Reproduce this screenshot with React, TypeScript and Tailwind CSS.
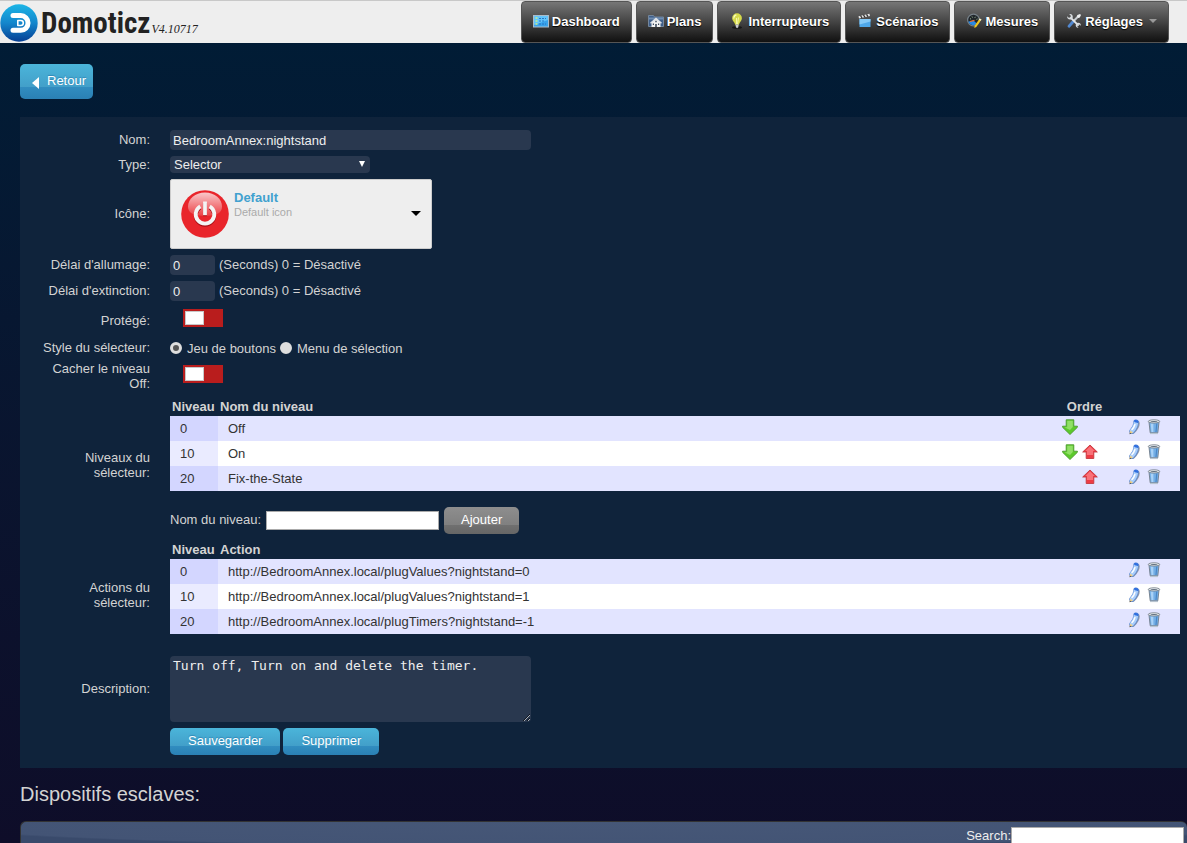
import React from "react";

function DashboardIcon() {
  return (
    <svg width="16" height="16" viewBox="0 0 16 16" aria-hidden="true">
      <rect x="0.5" y="2.5" width="15" height="11.5" fill="#38a3ec" stroke="#a9bccb" />
      <path d="M1 3h14v4L1 12z" fill="#62c4fb" />
      <path d="M2.5 5h2M2.5 8h2M2.5 11h2" stroke="#c8f08a" strokeWidth="1.4" />
      <path d="M6 5.5h7M6 8h5M6 11h7" stroke="#2170c0" strokeWidth="0.9" strokeDasharray="2 1" />
    </svg>
  );
}

function PlansIcon() {
  return (
    <svg width="16" height="16" viewBox="0 0 16 16" aria-hidden="true">
      <path d="M0.5 2.5h5l1 1.5h9v9.5h-15z" fill="#3f5f8a" stroke="#73869c" />
      <path d="M1 4.5h14v2H1z" fill="#6f8db1" />
      <path d="M3.500 9.500V14h9V9.500L8 5.500z" fill="#f2f2f2" />
      <path d="M2.500 10.300L8 5.500l5.500 4.800" fill="none" stroke="#dfe3e8" strokeWidth="1.5" />
      <path d="M7.200 11h1.600v3H7.200zM4.800 10.500H6V12H4.800zM10 10.500h1.200V12H10zM7.300 7.800h1.400v1.400H7.300z" fill="#3c4a5c" />
    </svg>
  );
}

function BulbIcon() {
  return (
    <svg width="16" height="16" viewBox="0 0 16 16" aria-hidden="true">
      <ellipse cx="8" cy="14.5" rx="5" ry="1.3" fill="#161616" />
      <path d="M8 0.3a4.9 4.9 0 0 1 4.9 4.9c0 2.6-2.5 4-3 6.6H6.200c-.4-2.600-3.100-4-3.100-6.600A4.900 4.900 0 0 1 8 .3z" fill="#d5d94b" />
      <path d="M6.300 1.500c-2 1-2.500 3.500-1.300 5.100C5 4.500 6 3 8 2z" fill="#fbffc5" />
      <path d="M7.500 5v6M9.500 4.500L8.500 11" stroke="#f8f9b1" strokeWidth="0.9" />
      <path d="M6.500 11.500h3.200l-.4 2.700-1.200 1-1.200-1z" fill="#c9ccd0" />
    </svg>
  );
}

function ScenesIcon() {
  return (
    <svg width="16" height="16" viewBox="0 0 16 16" aria-hidden="true">
      <path d="M2.500 6h11v8h-11z" fill="#4fa8ea" />
      <path d="M2.500 6h11v2.500l-11 3z" fill="#86caf8" />
      <path d="M2 5.500l-.5-2.300L12.400.7l.6 2.200z" fill="#e6e6e6" />
      <path d="M3.500 2.500L5 5M6.500 2L8 4.300M9.500 1.300L11 3.600" stroke="#333" strokeWidth="1.3" />
    </svg>
  );
}

function GaugeIcon() {
  return (
    <svg width="16" height="16" viewBox="0 0 16 16" aria-hidden="true">
      <circle cx="7.500" cy="7" r="5.900" fill="#20262b" stroke="#78838b" strokeWidth="1.200" />
      <path d="M2.400 8.500a5.200 5.200 0 0 0 8.700 2.200L7.500 7.400z" fill="#2989e4" />
      <path d="M4 5.500l1 .7M6 3.500l.5 1M9.500 3.800l-.7 1M11.500 6l-1 .4" stroke="#a5c299" strokeWidth="0.900" />
      <path d="M13.700 5.500l1.800 1.100-5.200 7.500-2 1 .3-2.300z" fill="#f2c51d" />
      <path d="M13.700 5.500l1.800 1.100-.8 1.200-1.900-1.100z" fill="#efefe0" />
      <path d="M4 8.500l4.500-1.200" stroke="#ef6a2a" strokeWidth="1.200" />
    </svg>
  );
}

function ToolsIcon() {
  return (
    <svg width="16" height="16" viewBox="0 0 16 16" aria-hidden="true">
      <path d="M12.500 3L6.800 9" stroke="#c8cdd1" strokeWidth="2" />
      <path d="M6.800 9L3 13.200" stroke="#5288cf" strokeWidth="2.800" strokeLinecap="round" />
      <path d="M4.300 4.300l8.300 8.300" stroke="#e3e6e8" strokeWidth="1.900" />
      <path d="M1.300 3.200l1.500 1.500 1.700-.3.300-1.700L3.300 1.200c2-.6 4 1 3.400 3.600L5 6.400C2.600 7 .7 5.300 1.300 3.200z" fill="#d8dcdf" />
      <path d="M14.700 12.700l-1.500-1.300-1.500.4-.4 1.500 1.200 1.500c-1.800.4-3.200-1.300-2.700-3.200l1.800-1.800c1.900-.4 3.600 1 3.100 2.900z" fill="#d8dcdf" />
      <path d="M11.400 2l2.600-.9 1 1-1.200 2.500-1.500.4-1.400-1.500z" fill="#eceeef" />
    </svg>
  );
}

const menu = [
  { label: "Dashboard", icon: <DashboardIcon /> },
  { label: "Plans", icon: <PlansIcon /> },
  { label: "Interrupteurs", icon: <BulbIcon /> },
  { label: "Scénarios", icon: <ScenesIcon /> },
  { label: "Mesures", icon: <GaugeIcon /> },
  { label: "Réglages", icon: <ToolsIcon />, caret: true },
];

function DomoticzMark() {
  return (
    <svg width="38" height="38" viewBox="0 0 38 38" aria-hidden="true">
      <defs>
        <linearGradient id="mark" x1="0" y1="0" x2="0" y2="1">
          <stop offset="0" stopColor="#1cb5e6" />
          <stop offset="0.5" stopColor="#1486cc" />
          <stop offset="1" stopColor="#063f94" />
        </linearGradient>
      </defs>
      <circle cx="19" cy="19" r="18.7" fill="url(#mark)" />
      <path
        d="M13 11.600h7.700a7.300 7.300 0 0 1 0 14.700H13"
        fill="none"
        stroke="#fff"
        strokeWidth="5"
        strokeLinecap="round"
      />
      <path d="M17.800 16.500h3a2.500 2.500 0 0 1 0 5h-3z" fill="#1486cc" stroke="#fff" strokeWidth="1.600" strokeLinejoin="round" />
    </svg>
  );
}

function PowerIcon() {
  return (
    <svg width="48" height="48" viewBox="0 0 48 48" aria-hidden="true">
      <defs>
        <linearGradient id="gloss" x1="0" y1="0" x2="0" y2="1">
          <stop offset="0" stopColor="#fff" stopOpacity="0.75" />
          <stop offset="1" stopColor="#fff" stopOpacity="0.12" />
        </linearGradient>
      </defs>
      <circle cx="24" cy="24" r="23.8" fill="#e9252b" />
      <path d="M24 2.5c10 0 17 6.500 17 14 0 6-5 9.500-17 9.500S7 22.500 7 16.500c0-7.500 7-14 17-14z" fill="url(#gloss)" />
      <g fill="none" strokeWidth="3.800">
        <path d="M19.300 17.600a9.300 9.300 0 1 0 9.400 0M24 13v13.300" stroke="#a80f16" />
        <path d="M19.300 16.300a9.300 9.300 0 1 0 9.400 0" stroke="#f4f4f4" />
        <path d="M24 11.500v13.700" stroke="#f4f4f4" />
      </g>
    </svg>
  );
}

function ArrowIcon({ up = false }: { up?: boolean }) {
  return up ? (
    <svg width="16" height="16" viewBox="0 0 16 16" aria-hidden="true">
      <path d="M8 1l7.300 7h-3.500v6.500H4.200V8H.7z" fill="#ee3b45" stroke="#c33a40" strokeWidth="0.900" />
      <path d="M8 2.300L12.800 7H11v4H5V7H3.200z" fill="#ff8f94" opacity="0.650" />
    </svg>
  ) : (
    <svg width="16" height="16" viewBox="0 0 16 16" aria-hidden="true">
      <path d="M8 15.500L.6 8.300V7.200h3.600V.8h7.600v6.400h3.600v1.100z" fill="#5cc92b" stroke="#4c9a2f" strokeWidth="0.900" />
      <path d="M5.200 1.800h5.600V8L8 11 2.500 8.300h2.700z" fill="#b4ee8d" opacity="0.600" />
    </svg>
  );
}

function PenIcon() {
  return (
    <svg width="16" height="16" viewBox="0 0 16 16" aria-hidden="true">
      <g fill="none" strokeLinecap="round">
        <path d="M10.500 4.200Q10.500 8 5.800 12.700" stroke="#8e98a8" strokeWidth="4.500" />
        <path d="M9 3.300Q9.200 7.500 5 12.200" stroke="#5a86d0" strokeWidth="5.400" />
        <path d="M8.800 4Q8.800 7.500 5 11.900" stroke="#a9cefa" strokeWidth="4.400" />
        <path d="M7.900 5.500Q7.200 8.200 5 10.500" stroke="#fff" strokeWidth="1.400" />
        <path d="M8.300 2.100l2 .6" stroke="#2f6fe0" strokeWidth="2.400" />
      </g>
      <path d="M3 11.500l3 2-3.300 1.700z" fill="#f0cf85" />
      <path d="M2.500 15.300l.3-1.700 1.500 1z" fill="#38404f" />
    </svg>
  );
}

function TrashIcon() {
  return (
    <svg width="14" height="16" viewBox="0 0 14 16" aria-hidden="true">
      <path d="M2 3h10l-1.200 10.800H3.200z" fill="#72aee6" stroke="#727d89" strokeWidth="0.900" />
      <path d="M3.700 4.500l.8 8.500h1.900V4.500z" fill="#a9d2f7" />
      <path d="M9.800 4.500L9 13" stroke="#4a86c6" strokeWidth="1.200" />
      <ellipse cx="7" cy="2.400" rx="5.700" ry="1.600" fill="#edf1f4" stroke="#7a848e" strokeWidth="0.900" />
      <ellipse cx="7" cy="2.500" rx="3.600" ry="0.600" fill="#5f6e7c" />
      <path d="M3 14.500h8" stroke="#b7c3ce" strokeWidth="1.200" />
    </svg>
  );
}

function Row({ label, htmlFor, children, className = "" }: { label?: string; htmlFor?: string; children: React.ReactNode; className?: string }) {
  return (
    <div className={`grid grid-cols-[130px_minmax(0,1fr)] items-center gap-x-5 ${className}`}>
      {label ? (
        <label htmlFor={htmlFor} className="pb-px pl-4 text-right leading-[15px]">
          {label}
        </label>
      ) : (
        <span />
      )}
      <div className="min-w-0">{children}</div>
    </div>
  );
}

function Toggle({ id }: { id: string }) {
  return (
    <input
      id={id}
      type="checkbox"
      role="switch"
      className="mb-[5px] ml-[13px] block h-[18px] w-10 appearance-none bg-[#b91d1d] p-[2px] before:block before:h-[14px] before:w-[19px] before:border before:border-[#c8c8c8] before:bg-white checked:bg-[#3b8f3b] checked:before:ml-auto"
    />
  );
}

function Radio({ id, label, checked = false }: { id: string; label: string; checked?: boolean }) {
  return (
    <label htmlFor={id} className="flex items-center gap-[5px]">
      <input
        id={id}
        type="radio"
        name="style"
        defaultChecked={checked}
        className="h-3 w-3 appearance-none rounded-full border-[3px] border-[#dedede] bg-[#dedede] checked:bg-[#555]"
      />
      {label}
    </label>
  );
}

type Level = { level: number; name: string; down?: boolean; up?: boolean };

const levels: Level[] = [
  { level: 0, name: "Off", down: true },
  { level: 10, name: "On", down: true, up: true },
  { level: 20, name: "Fix-the-State", up: true },
];

const actions: Level[] = [
  { level: 0, name: "http://BedroomAnnex.local/plugValues?nightstand=0" },
  { level: 10, name: "http://BedroomAnnex.local/plugValues?nightstand=1" },
  { level: 20, name: "http://BedroomAnnex.local/plugTimers?nightstand=-1" },
];

function LevelTable({ id, title, rows, ordered = false }: { id: string; title: string; rows: Level[]; ordered?: boolean }) {
  return (
    <table id={id} className="w-full table-fixed border-collapse text-left">
      <colgroup>
        <col className="w-12" />
        <col />
        <col className="w-[65px]" />
        <col className="w-[63px]" />
      </colgroup>
      <thead>
        <tr className="h-[19px] font-bold">
          <th className="px-[2px] py-0">Niveau</th>
          <th className="px-[2px] py-0">{title}</th>
          <th className="p-0 text-center">{ordered ? "Ordre" : ""}</th>
          <th className="p-0" />
        </tr>
      </thead>
      <tbody className="text-[#333]">
        {rows.map((row) => (
          <tr key={row.level} className="h-[25px] odd:bg-[#e2e4ff] even:bg-white odd:[&>td:first-child]:bg-[#d3d6ff] even:[&>td:first-child]:bg-[#eaebff]">
            <td className="px-2.5 py-0">{row.level}</td>
            <td className="px-2.5 py-0">{row.name}</td>
            <td className="p-0 pl-2.5">
              <div className="grid h-5 grid-cols-[16px_16px] gap-1">
                {row.down ? <button type="button" aria-label="Descendre" className="h-4"><ArrowIcon /></button> : <span />}
                {row.up ? <button type="button" aria-label="Monter" className="h-4"><ArrowIcon up /></button> : <span />}
              </div>
            </td>
            <td className="p-0 pl-2.5">
              <div className="flex h-5 gap-1">
                <button type="button" aria-label="Modifier" className="h-4"><PenIcon /></button>
                <button type="button" aria-label="Supprimer le niveau" className="h-4"><TrashIcon /></button>
              </div>
            </td>
          </tr>
        ))}
      </tbody>
    </table>
  );
}

const blueButton =
  "rounded-[5px] bg-[linear-gradient(#4bb5da,#429fc9_66%,#318dc0_66%,#2a80b4)] pb-[2px] text-white [text-shadow:0_-1px_1px_#2f86b5]";
const darkField = "rounded bg-[#29384f] text-[#eee] outline-none";

export default function App() {
  return (
    <div className="h-screen overflow-y-auto bg-linear-to-b from-[#001d36] to-[#0e0d29] font-['Liberation_Sans',Arial,sans-serif] text-[13px] leading-[15px] text-[#d3d3d3] [scrollbar-width:none]">
      <header className="flex h-[43px] items-start justify-between border-t border-[#c8c8c8] bg-[#eee] pr-[18px]">
        <a href="#accueil" className="flex items-center gap-[3px] pt-[3px]">
          <DomoticzMark />
          <span className="flex items-baseline gap-px text-[#222]">
            <span className="font-['Roboto_Condensed','Liberation_Sans_Narrow',sans-serif] text-[29px] leading-[38px] font-bold">Domoticz</span>
            <span className="font-['Liberation_Serif',serif] text-[12px] italic">V4.10717</span>
          </span>
        </a>
        <nav className="flex h-[42px] gap-1">
          {menu.map((item) => (
            <a
              key={item.label}
              href={`#${item.label}`}
              className="flex items-center gap-[3px] rounded border border-[#555] bg-linear-to-b from-[#777] via-[#444] to-[#111] px-[11px] pb-[2px] font-bold text-white [text-shadow:0_1px_1px_#000]"
            >
              {item.icon}
              {item.label}
              {item.caret && <span className="ml-[3px] border-x-4 border-t-4 border-x-transparent border-t-[#999]" />}
            </a>
          ))}
        </nav>
      </header>

      <main className="pl-5">
        <button type="button" className={`mt-[21px] flex h-[35px] items-center gap-2 pr-[7px] pl-3 ${blueButton}`}>
          <svg width="7" height="12" viewBox="0 0 7 12" aria-hidden="true" className="mt-1">
            <path d="M7 0v12L0 6z" fill="#fff" />
          </svg>
          Retour
        </button>

        <form className="mt-[18px] flex flex-col gap-1.5 bg-[#0f233b] pt-[13px] pr-[7px] pb-[13px]">
          <Row label="Nom:" htmlFor="nom">
            <input id="nom" defaultValue="BedroomAnnex:nightstand" className={`block h-5 w-[361px] px-[3px] ${darkField}`} />
          </Row>
          <Row label="Type:" htmlFor="type">
            <div className="relative w-[200px]">
              <select id="type" className={`block h-[17px] w-full appearance-none px-1 ${darkField}`}>
                <option>Selector</option>
              </select>
              <svg width="6" height="6" viewBox="0 0 6 6" aria-hidden="true" className="pointer-events-none absolute top-[5px] right-[5px]">
                <path d="M0 0h6L3 6z" fill="#fff" />
              </svg>
            </div>
          </Row>
          <Row label="Icône:" htmlFor="icone">
            <button id="icone" type="button" className="flex h-[70px] w-[262px] items-center rounded-[2px] border border-[#ccc] bg-[#eee] px-2.5 text-left">
              <PowerIcon />
              <span className="ml-[5px] flex-1 self-start pt-2.5">
                <span className="block font-bold text-[#41a1cf]">Default</span>
                <span className="block text-[11px] text-[#aaa]">Default icon</span>
              </span>
              <span className="mb-0.5 border-x-5 border-t-5 border-x-transparent border-t-black" />
            </button>
          </Row>
          <Row label="Délai d'allumage:" htmlFor="allumage">
            <div className="flex items-center gap-1">
              <input id="allumage" defaultValue="0" className={`h-5 w-[45px] px-[3px] ${darkField}`} />
              <span className="pb-px">(Seconds) 0 = Désactivé</span>
            </div>
          </Row>
          <Row label="Délai d'extinction:" htmlFor="extinction">
            <div className="flex items-center gap-1">
              <input id="extinction" defaultValue="0" className={`h-5 w-[45px] px-[3px] ${darkField}`} />
              <span className="pb-px">(Seconds) 0 = Désactivé</span>
            </div>
          </Row>
          <Row label="Protégé:" htmlFor="protege" className="h-[27px]">
            <Toggle id="protege" />
          </Row>
          <Row label="Style du sélecteur:" htmlFor="style-boutons" className="h-[15px]">
            <div className="flex gap-1">
              <Radio id="style-boutons" label="Jeu de boutons" checked />
              <Radio id="style-menu" label="Menu de sélection" />
            </div>
          </Row>
          <Row label="Cacher le niveau Off:" htmlFor="cacher" className="h-[30px]">
            <Toggle id="cacher" />
          </Row>
          <Row label="Niveaux du sélecteur:" htmlFor="niveau">
            <LevelTable id="niveaux" title="Nom du niveau" rows={levels} ordered />
            <div className="mt-4 flex items-center gap-[5px]">
              <label htmlFor="niveau" className="pb-[2px]">Nom du niveau:</label>
              <input id="niveau" className="h-[19px] w-[173px] border border-[#aaa] bg-white px-1 text-[#333]" />
              <button type="button" className="h-[27px] rounded-[5px] bg-[linear-gradient(#8e8e8e,#808080_66%,#707070_66%,#666)] px-[17px] pb-[2px] text-white">
                Ajouter
              </button>
            </div>
          </Row>
          <Row label="Actions du sélecteur:">
            <div className="pb-4">
              <LevelTable id="actions" title="Action" rows={actions} />
            </div>
          </Row>
          <Row label="Description:" htmlFor="description">
            <textarea
              id="description"
              defaultValue="Turn off, Turn on and delete the timer."
              className={`block h-[66px] w-[361px] px-[3px] py-[2px] font-['DejaVu_Sans_Mono',monospace] leading-4 ${darkField}`}
            />
          </Row>
          <Row>
            <div className="flex gap-[3px]">
              <button type="button" className={`h-[27px] px-[18px] ${blueButton}`}>Sauvegarder</button>
              <button type="button" className={`h-[27px] px-[18px] ${blueButton}`}>Supprimer</button>
            </div>
          </Row>
        </form>

        <h2 className="py-4 text-[20px] leading-[21px]">Dispositifs esclaves:</h2>
        <section className="flex h-8 items-start justify-end rounded-t-md border-t border-l border-[#333] bg-[radial-gradient(ellipse_60%_25px_at_50%_0,#465777_0%,#435475_96%,#394a6b_100%)] pt-[5px] pr-[3px] text-[#eee]">
          <label htmlFor="search" className="pt-px">Search:</label>
          <input id="search" type="search" className="h-[21px] w-[173px] border border-[#aaa] bg-white px-1 text-[#333]" />
        </section>
      </main>
    </div>
  );
}
